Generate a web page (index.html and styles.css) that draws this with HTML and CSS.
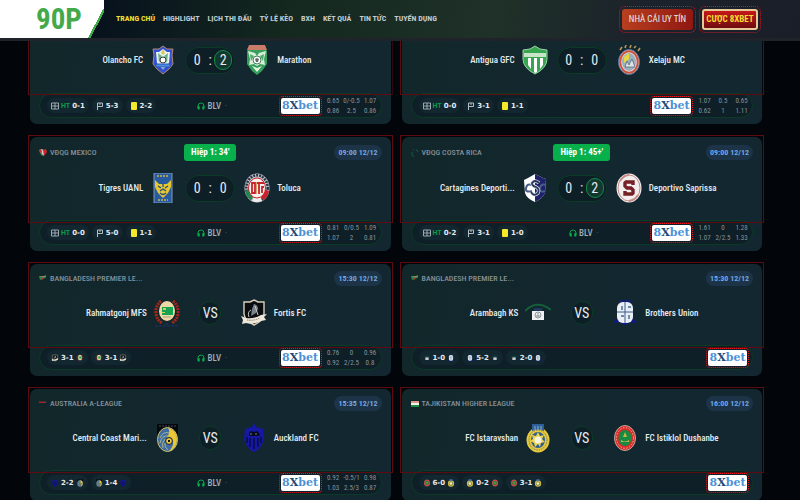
FILE: index.html
```html
<!DOCTYPE html>
<html lang="vi">
<head>
    <meta charset="UTF-8">
    <meta name="viewport" content="width=device-width, initial-scale=1.0">
    <title>90P</title>
    <link rel="stylesheet" href="styles.css">
</head>
<body>
    <!-- Icon dùng chung -->
    <svg class="sprite" aria-hidden="true">
        <symbol id="i-field" viewBox="0 0 8 8"><path d="M.5 1h7v6h-7zM4 1v6M.5 4h7" fill="none" stroke="#a9b4bb" stroke-width=".9"/></symbol>
        <symbol id="i-corner" viewBox="0 0 8 8"><path d="M1.5 8V1h5v3.500h-5M4 1v2" fill="none" stroke="#b4bec4" stroke-width="1"/></symbol>
        <symbol id="i-head" viewBox="0 0 8 8"><path d="M1 5V4a3 3 0 0 1 6 0v1" fill="none" stroke="#08a84a" stroke-width="1"/><path d="M.5 4.2h2.2v3.3H1.2l-.7-.8zM5.3 4.2h2.2v2.5l-.7.8H5.3z" fill="#08b04c"/></symbol>

        <symbol id="f-mexico" viewBox="0 0 8 8"><path d="M0 1l3-1 1 7-2-1z" fill="#3a8c5a"/><path d="M2 0l3 1v6L3 5z" fill="#ccc"/><path d="M4 1l3-1 1 3-3 4z" fill="#d2232a"/><path d="M0 1l2-1 1 3-2 1z" fill="#c8342f"/></symbol>
        <symbol id="f-costa" viewBox="0 0 8 8"><path d="M1 3v3l2 2M5 1h1l1 2M2 1l1-1" fill="none" stroke="#145c40"/></symbol>
        <symbol id="f-bangla" viewBox="0 0 8 8"><path d="M0 1l3 .5 4-1v2L4 4 1 5z" fill="#2f8250"/><path d="M0 1l3 .5 4-1v.8l-4 1z" fill="#c89a68"/><path d="M2 3h2v1.5H2z" fill="#b5322c"/></symbol>
        <symbol id="f-aus" viewBox="0 0 8 8"><path d="M0 1l1 1 1-1 1 1 1-1 1 1 2-1v2H0z" fill="#a8242c"/></symbol>
        <symbol id="f-tajik" viewBox="0 0 8 8"><path d="M0 1h8v2H0z" fill="#d89a90"/><path d="M0 3h8v2H0z" fill="#f3f3ea"/><path d="M0 5h8v2H0z" fill="#1e8c45"/></symbol>

        <symbol id="c-olancho" viewBox="0 0 26 30"><path d="M13 1l4 3h6l-1 6 1 9-4 5-6 5-6-5-4-5 1-9-1-6h6z" fill="#3550d8" stroke="#b58a6a"/><path d="M13 4l4 3h3l-1 11-6 7-6-7L6 7h3z" fill="#e9f2ee"/><path d="M8 8l4 3-3 7zM18 8l-4 3 3 7z" fill="#68b48c"/><path d="M13 4l2 4-2 2-2-2z" fill="#d4c95a"/><circle cx="13" cy="15" r="3" fill="#fff" stroke="#333"/><path d="M6 19h14v3H6zM9 24h8" fill="#4c8fe0" stroke="#2455b8"/></symbol>
        <symbol id="c-marathon" viewBox="0 0 26 30"><path d="M6 1h14l3 5v13l-5 7-5 4-5-4-5-7V6z" fill="#35a05b"/><path d="M5 0h16l2 5H3z" fill="#c77b68"/><path d="M4 6l7 2 2 3 2-3 7-2-2 8 1 6-5-1-3 2-3-2-5 1 1-6z" fill="#d9eeda"/><path d="M6 9l4 2-3 5zM20 9l-4 2 3 5z" fill="#4bab69"/><path d="M8 21l5 6 5-6-5 2z" fill="#e5f3e5"/><circle cx="13" cy="15" r="4" fill="#fff" stroke="#43805b"/><path d="M11 14l2-1 2 1-1 3h-2z" fill="#666"/></symbol>
        <symbol id="c-antigua" viewBox="0 0 26 30"><path d="M13 1l5 3 7 1v9q0 9-12 15Q1 23 1 14V5l7-1z" fill="#36a651" stroke="#9bd1a6"/><path d="M2 8h22v4H2z" fill="#c7e4c9"/><path d="M6 13h3v11l-3-4zM12 13h3v14l-2 1-1-1zM18 13h3v7l-3 4z" fill="#fff"/></symbol>
        <symbol id="c-xelaju" viewBox="0 0 26 30"><path d="M4 5l2-3M9 3l1-3M14 3l1-3M18 3l2-2M22 6l2-3" stroke="#b7955b" stroke-width="1.6"/><ellipse cx="13" cy="17" rx="10.5" ry="12.5" fill="#e3dcda" stroke="#4f6f98"/><ellipse cx="13" cy="17" rx="8.8" ry="10.8" fill="none" stroke="#ce5140" stroke-width="2"/><ellipse cx="13" cy="17" rx="7" ry="9" fill="#9bb0bf"/><path d="M8 12l5-4v6l-5 4z" fill="#e6d83e"/><path d="M9 22l2-6 2 4 3-6 3 8z" fill="#dfe4e8" stroke="#566a7c" stroke-width=".8"/></symbol>
        <symbol id="c-tigres" viewBox="0 0 26 30"><path d="M4 0h18v30H4z" fill="#285a9e" stroke="#8199b8"/><path d="M7 3h12M8 27h10" stroke="#a39d5e" stroke-width="2" stroke-dasharray="2 1"/><path d="M5 7l4 4h8l4-4v7l-3 6-5 5-5-5-3-6z" fill="#e4c532"/><path d="M8 13l3 2M18 13l-3 2M10 18l3-2 3 2M10 20q3 3 6 0M13 10v4" stroke="#234c82" stroke-width="1.3" fill="none"/></symbol>
        <symbol id="c-toluca" viewBox="0 0 26 30"><ellipse cx="13" cy="15" rx="12.5" ry="14.5" fill="#c9c8c9"/><ellipse cx="13" cy="15" rx="10.7" ry="12.7" fill="none" stroke="#27364d" stroke-width="2.600" stroke-dasharray="2 1"/><path d="M1 18l4-2 4 9-2 2q-5-3-6-9z" fill="#238550"/><path d="M25 18l-5-2-3 9 3 2q4-3 5-9z" fill="#c8232a"/><path d="M9 25h8l1 3q-5 2-10 0z" fill="#eee"/><ellipse cx="13" cy="15" rx="8.5" ry="10" fill="#f6efed" stroke="#c8242b"/><path d="M8 10v10h3V10zM13 10h7M15 10v11M20 14h-2v6" fill="none" stroke="#c8242b" stroke-width="1.800"/><path d="M12.500 9v12" stroke="#c79a51" stroke-width=".8"/></symbol>
        <symbol id="c-cartagines" viewBox="0 0 26 30"><path d="M13 1l8 4 3 1-1 14q-3 6-10 9Q5 26 3 20L2 7l4-2z" fill="#fff"/><path d="M13 1l8 4 3 1-1 14q-3 6-10 9z" fill="#1d2269"/><path d="M10 12q-5-2-6 3t6 3M24 12q-5-2-6 3t5 3" fill="none" stroke="#4b5d88" stroke-width="2"/><path d="M17 10q-4-4-7 0 0 3 4 4 4 2 2 6-4 4-7-1" fill="none" stroke="#dce2eb" stroke-width="3.4"/><path d="M17 10q-4-4-7 0 0 3 4 4 4 2 2 6-4 4-7-1" fill="none" stroke="#26345e" stroke-width="1.8"/></symbol>
        <symbol id="c-saprissa" viewBox="0 0 26 30"><ellipse cx="13" cy="15" rx="12.5" ry="14.5" fill="#f3eeee"/><ellipse cx="13" cy="15" rx="11" ry="13" fill="none" stroke="#b4706c" stroke-width=".8"/><path d="M4 8q4-6 9-6M22 22q-3 5-9 6" fill="none" stroke="#c78a84" stroke-width="2"/><path d="M17 12V9h-7l-1 1v3l2 2h4l2 2v3l-1 1H9v-3" fill="none" stroke="#762126" stroke-width="3.400"/></symbol>
        <symbol id="c-rahmat" viewBox="0 0 26 30"><path d="M7 3q-6 5-5 13 1 6 6 9M19 3q6 5 5 13-1 6-6 9" fill="none" stroke="#a92618" stroke-width="3" stroke-dasharray="2 .9"/><ellipse cx="13" cy="13" rx="8" ry="10" fill="#eed9a6"/><path d="M8 9h11v8H8z" fill="#16a352"/><path d="M9 10h3v2H9zM8 14h3v1H8z" fill="#dacb58"/><path d="M9 19h8" stroke="#a79b7c"/><path d="M1 28h24M11 26h4" stroke="#1e2a6c" stroke-width="1.4" stroke-dasharray="3 1"/></symbol>
        <symbol id="c-fortis" viewBox="0 0 26 30"><path d="M13 2l4 2h6v12q-1 7-10 11Q4 23 3 16V4h6z" fill="#0a0d10" stroke="#d9d0bb" stroke-width="1.4"/><path d="M13 6q4 1 4 5l-2 4-5 3 1-7z" fill="#79828a"/><path d="M8 19q-2-5 2-7M14 8l3 9" stroke="#c9c9c4" fill="none"/><path d="M0 18l5 2q8 1 15-3l6-1-3 3 2 3-5 1q-8 4-15 2l-4 1 1-4z" fill="#eee8da"/><path d="M6 22q7 1 13-2" stroke="#8a8377" fill="none" stroke-dasharray="1.4 .8"/></symbol>
        <symbol id="c-arambagh" viewBox="0 0 26 30"><path d="M0 13Q12 1 26 12" fill="none" stroke="#14603c" stroke-width="1.8"/><path d="M9 10h8v3H9z" fill="#1d3a5e"/><path d="M7 13h12v9H7z" fill="#eef2f4"/><circle cx="13" cy="17" r="3" fill="none" stroke="#8b949b"/><path d="M11 18h4M13 15v4" stroke="#8b949b"/></symbol>
        <symbol id="c-brothers" viewBox="0 0 26 30"><path d="M7 2h12v5H7z" fill="#12206e"/><path d="M1 25l6-6 6 4 6-4 6 6-6-1-6 3-6-3z" fill="#10159a"/><rect x="5" y="4" width="16" height="21" rx="6" fill="#e9eff5"/><path d="M13 4v21M5 14h16" stroke="#3b5c8e"/><path d="M10 8v4M16 9h3M9 18h3M17 17v4" stroke="#40688c" stroke-width="1.4"/></symbol>
        <symbol id="c-coast" viewBox="0 0 26 30"><path d="M3 1h21v17H3z" fill="#05080d"/><path d="M5 3h17" stroke="#444a52" stroke-dasharray="2 1"/><ellipse cx="13.500" cy="16.500" rx="10" ry="12" fill="#3d6ca6" stroke="#d3c268"/><path d="M14 5q9 2 9 12-1 9-8 11 5-5 4-10-1-5-6-4 4-5 1-9z" fill="#ecc934"/><path d="M6 15q3-7 9-5M6 20q2-8 8-7M9 25q-2-5 2-9M14 27q-4-3-3-7" fill="none" stroke="#a8b88d"/><circle cx="15" cy="18" r="3.4" fill="#e9c93f" stroke="#222"/><path d="M14 17h2v2h-2z" fill="#111"/></symbol>
        <symbol id="c-auckland" viewBox="0 0 26 30"><path d="M13 0l2 4 7 2 1 10q-2 9-10 13Q5 25 3 16L4 6l7-2z" fill="#1418a4"/><path d="M8 10l2-2 3 1 3-1 3 3-1 2H8z" fill="#080a20"/><path d="M6 14v6M9 15v9M13 15v11M17 15v9M20 14v6" stroke="#070a3c" stroke-width="1.4"/><path d="M9 11h2M14 11h2" stroke="#7d7d83"/></symbol>
        <symbol id="c-istar" viewBox="0 0 26 30"><path d="M7 1h12v7H7z" fill="#2d5f98"/><ellipse cx="13" cy="17" rx="11.500" ry="12.500" fill="#e8c93a"/><ellipse cx="13" cy="17" rx="9" ry="10" fill="none" stroke="#6f7d72" stroke-dasharray="1.500 1"/><ellipse cx="13" cy="17" rx="7" ry="8" fill="#315e8f"/><path d="M13 9l2 4 4-1-2 4 3 3-4 1-1 4-2-3-3 3-1-4-4-2 3-2-1-4 4 1z" fill="#ecd34c"/><circle cx="13" cy="17" r="3.500" fill="#f5f2df"/><path d="M7 3q6-4 12 0v5q-6-3-12 0z" fill="#2d5f98"/><path d="M9 4h8M9 6h8" stroke="#8dadc9" stroke-dasharray="2 1"/></symbol>
        <symbol id="c-istiklol" viewBox="0 0 26 30"><ellipse cx="13" cy="15" rx="10.500" ry="12.500" fill="#d92d2c" stroke="#c2a69a"/><ellipse cx="13" cy="15" rx="8.500" ry="10.300" fill="none" stroke="#f2aaa0" stroke-dasharray="1.500 1.500"/><ellipse cx="13" cy="15" rx="6.500" ry="8" fill="#178a43"/><path d="M13 9l2 5h-4zM9 17q4 3 8 0v2H9z" fill="#ccb640"/></symbol>
    </svg>

    <header class="header">
        <a class="logo" href="#"><span class="logo-text">90P</span></a>
        <nav class="nav">
            <a class="active" href="#">TRANG CHỦ</a>
            <a href="#">HIGHLIGHT</a>
            <a href="#">LỊCH THI ĐẤU</a>
            <a href="#">TỶ LỆ KÈO</a>
            <a href="#">BXH</a>
            <a href="#">KẾT QUẢ</a>
            <a href="#">TIN TỨC</a>
            <a href="#">TUYỂN DỤNG</a>
        </nav>
        <div class="header-actions">
            <a class="btn btn-red" href="#">NHÀ CÁI UY TÍN</a>
            <a class="btn btn-gold" href="#">CƯỢC 8XBET</a>
        </div>
    </header>

    <main class="matches">
        <!-- Olancho - Marathon -->
        <article class="card card-top">
            <a class="match" href="#">
                <div class="teams">
                    <span class="team home">Olancho FC</span>
                    <svg class="crest"><use href="#c-olancho"/></svg>
                    <div class="score"><span>0</span><i>:</i><span class="goal">2</span></div>
                    <svg class="crest"><use href="#c-marathon"/></svg>
                    <span class="team">Marathon</span>
                </div>
            </a>
            <div class="foot">
                <div class="chips">
                    <span class="chip"><svg class="ico"><use href="#i-field"/></svg><em>HT</em> 0-1</span>
                    <span class="chip"><svg class="ico"><use href="#i-corner"/></svg>5-3</span>
                    <span class="chip"><b class="yellow"></b>2-2</span>
                </div>
                <div class="blv"><svg class="ico"><use href="#i-head"/></svg>BLV <small>·</small></div>
                <div class="bet">
                    <a class="bet-logo" href="#">8<b>X</b>bet</a>
                    <div class="odds"><span>0.65</span><span>0/-0.5</span><span>1.07</span><span>0.86</span><span>2.5</span><span>0.86</span></div>
                </div>
            </div>
        </article>

        <!-- Antigua - Xelaju -->
        <article class="card card-top">
            <a class="match" href="#">
                <div class="teams">
                    <span class="team home">Antigua GFC</span>
                    <svg class="crest"><use href="#c-antigua"/></svg>
                    <div class="score"><span>0</span><i>:</i><span>0</span></div>
                    <svg class="crest"><use href="#c-xelaju"/></svg>
                    <span class="team">Xelaju MC</span>
                </div>
            </a>
            <div class="foot">
                <div class="chips">
                    <span class="chip"><svg class="ico"><use href="#i-field"/></svg><em>HT</em> 0-0</span>
                    <span class="chip"><svg class="ico"><use href="#i-corner"/></svg>3-1</span>
                    <span class="chip"><b class="yellow"></b>1-1</span>
                </div>
                <div class="bet">
                    <a class="bet-logo" href="#">8<b>X</b>bet</a>
                    <div class="odds"><span>1.07</span><span>0.5</span><span>0.65</span><span>0.62</span><span>1</span><span>1.11</span></div>
                </div>
            </div>
        </article>

        <!-- Tigres - Toluca -->
        <article class="card">
            <a class="match" href="#">
                <div class="head live">
                    <span class="league"><svg class="ico"><use href="#f-mexico"/></svg>VĐQG MEXICO</span>
                    <span class="status">Hiệp 1: 34'</span>
                    <span class="time">09:00 12/12</span>
                </div>
                <div class="teams">
                    <span class="team home">Tigres UANL</span>
                    <svg class="crest"><use href="#c-tigres"/></svg>
                    <div class="score"><span>0</span><i>:</i><span>0</span></div>
                    <svg class="crest"><use href="#c-toluca"/></svg>
                    <span class="team">Toluca</span>
                </div>
            </a>
            <div class="foot">
                <div class="chips">
                    <span class="chip"><svg class="ico"><use href="#i-field"/></svg><em>HT</em> 0-0</span>
                    <span class="chip"><svg class="ico"><use href="#i-corner"/></svg>5-0</span>
                    <span class="chip"><b class="yellow"></b>1-1</span>
                </div>
                <div class="blv"><svg class="ico"><use href="#i-head"/></svg>BLV <small>·</small></div>
                <div class="bet">
                    <a class="bet-logo" href="#">8<b>X</b>bet</a>
                    <div class="odds"><span>0.81</span><span>0/0.5</span><span>1.09</span><span>1.07</span><span>2</span><span>0.81</span></div>
                </div>
            </div>
        </article>

        <!-- Cartagines - Saprissa -->
        <article class="card">
            <a class="match" href="#">
                <div class="head live">
                    <span class="league"><svg class="ico"><use href="#f-costa"/></svg>VĐQG COSTA RICA</span>
                    <span class="status">Hiệp 1: 45+'</span>
                    <span class="time">09:00 12/12</span>
                </div>
                <div class="teams">
                    <span class="team home">Cartagines Deporti...</span>
                    <svg class="crest"><use href="#c-cartagines"/></svg>
                    <div class="score"><span>0</span><i>:</i><span class="goal">2</span></div>
                    <svg class="crest"><use href="#c-saprissa"/></svg>
                    <span class="team">Deportivo Saprissa</span>
                </div>
            </a>
            <div class="foot">
                <div class="chips">
                    <span class="chip"><svg class="ico"><use href="#i-field"/></svg><em>HT</em> 0-2</span>
                    <span class="chip"><svg class="ico"><use href="#i-corner"/></svg>3-1</span>
                    <span class="chip"><b class="yellow"></b>1-0</span>
                </div>
                <div class="blv"><svg class="ico"><use href="#i-head"/></svg>BLV <small>·</small></div>
                <div class="bet">
                    <a class="bet-logo" href="#">8<b>X</b>bet</a>
                    <div class="odds"><span>1.61</span><span>0</span><span>1.28</span><span>1.07</span><span>2/2.5</span><span>1.33</span></div>
                </div>
            </div>
        </article>

        <!-- Rahmatgonj - Fortis -->
        <article class="card">
            <a class="match" href="#">
                <div class="head">
                    <span class="league"><svg class="ico"><use href="#f-bangla"/></svg>BANGLADESH PREMIER LE...</span>
                    <span class="time">15:30 12/12</span>
                </div>
                <div class="teams">
                    <span class="team home">Rahmatgonj MFS</span>
                    <svg class="crest"><use href="#c-rahmat"/></svg>
                    <div class="versus"><span>VS</span></div>
                    <svg class="crest"><use href="#c-fortis"/></svg>
                    <span class="team">Fortis FC</span>
                </div>
            </a>
            <div class="foot">
                <div class="chips">
                    <span class="chip"><svg class="ico"><use href="#c-fortis"/></svg>3-1<svg class="ico"><use href="#c-rahmat"/></svg></span>
                    <span class="chip"><svg class="ico"><use href="#c-rahmat"/></svg>3-1<svg class="ico"><use href="#c-fortis"/></svg></span>
                </div>
                <div class="blv"><svg class="ico"><use href="#i-head"/></svg>BLV <small>·</small></div>
                <div class="bet">
                    <a class="bet-logo" href="#">8<b>X</b>bet</a>
                    <div class="odds"><span>0.76</span><span>0</span><span>0.96</span><span>0.92</span><span>2/2.5</span><span>0.8</span></div>
                </div>
            </div>
        </article>

        <!-- Arambagh - Brothers Union -->
        <article class="card">
            <a class="match" href="#">
                <div class="head">
                    <span class="league"><svg class="ico"><use href="#f-bangla"/></svg>BANGLADESH PREMIER LE...</span>
                    <span class="time">15:30 12/12</span>
                </div>
                <div class="teams">
                    <span class="team home">Arambagh KS</span>
                    <svg class="crest"><use href="#c-arambagh"/></svg>
                    <div class="versus"><span>VS</span></div>
                    <svg class="crest"><use href="#c-brothers"/></svg>
                    <span class="team">Brothers Union</span>
                </div>
            </a>
            <div class="foot">
                <div class="chips">
                    <span class="chip"><svg class="ico"><use href="#c-arambagh"/></svg>1-0<svg class="ico"><use href="#c-brothers"/></svg></span>
                    <span class="chip"><svg class="ico"><use href="#c-brothers"/></svg>5-2<svg class="ico"><use href="#c-arambagh"/></svg></span>
                    <span class="chip"><svg class="ico"><use href="#c-arambagh"/></svg>2-0<svg class="ico"><use href="#c-brothers"/></svg></span>
                </div>
                <div class="bet">
                    <a class="bet-logo" href="#">8<b>X</b>bet</a>
                </div>
            </div>
        </article>

        <!-- Central Coast - Auckland -->
        <article class="card">
            <a class="match" href="#">
                <div class="head">
                    <span class="league"><svg class="ico"><use href="#f-aus"/></svg>AUSTRALIA A-LEAGUE</span>
                    <span class="time">15:35 12/12</span>
                </div>
                <div class="teams">
                    <span class="team home">Central Coast Mari...</span>
                    <svg class="crest"><use href="#c-coast"/></svg>
                    <div class="versus"><span>VS</span></div>
                    <svg class="crest"><use href="#c-auckland"/></svg>
                    <span class="team">Auckland FC</span>
                </div>
            </a>
            <div class="foot">
                <div class="chips">
                    <span class="chip"><svg class="ico"><use href="#c-auckland"/></svg>2-2<svg class="ico"><use href="#c-coast"/></svg></span>
                    <span class="chip"><svg class="ico"><use href="#c-coast"/></svg>1-4<svg class="ico"><use href="#c-auckland"/></svg></span>
                </div>
                <div class="blv"><svg class="ico"><use href="#i-head"/></svg>BLV <small>·</small></div>
                <div class="bet">
                    <a class="bet-logo" href="#">8<b>X</b>bet</a>
                    <div class="odds"><span>0.92</span><span>-0.5/1</span><span>0.98</span><span>1.03</span><span>2.5/3</span><span>0.87</span></div>
                </div>
            </div>
        </article>

        <!-- Istaravshan - Istiklol -->
        <article class="card">
            <a class="match" href="#">
                <div class="head">
                    <span class="league"><svg class="ico"><use href="#f-tajik"/></svg>TAJIKISTAN HIGHER LEAGUE</span>
                    <span class="time">16:00 12/12</span>
                </div>
                <div class="teams">
                    <span class="team home">FC Istaravshan</span>
                    <svg class="crest"><use href="#c-istar"/></svg>
                    <div class="versus"><span>VS</span></div>
                    <svg class="crest"><use href="#c-istiklol"/></svg>
                    <span class="team">FC Istiklol Dushanbe</span>
                </div>
            </a>
            <div class="foot">
                <div class="chips">
                    <span class="chip"><svg class="ico"><use href="#c-istiklol"/></svg>6-0<svg class="ico"><use href="#c-istar"/></svg></span>
                    <span class="chip"><svg class="ico"><use href="#c-istar"/></svg>0-2<svg class="ico"><use href="#c-istiklol"/></svg></span>
                    <span class="chip"><svg class="ico"><use href="#c-istiklol"/></svg>3-1<svg class="ico"><use href="#c-istar"/></svg></span>
                </div>
                <div class="bet">
                    <a class="bet-logo" href="#">8<b>X</b>bet</a>
                </div>
            </div>
        </article>
    </main>
</body>
</html>
```
FILE: styles.css
```css
* {
    box-sizing: border-box;
}
body {
    margin: 0;
    background: #02050a;
    color: #e6ecef;
    font-family: "Roboto Condensed", Roboto, "Liberation Sans", sans-serif;
    font-size: 9px;
    line-height: 12px;
}
a {
    color: inherit;
    text-decoration: none;
}
.sprite {
    display: none;
}

/* Thanh đầu trang */
.header {
    display: flex;
    align-items: stretch;
    height: 41px;
    padding-right: 42px;
    border-bottom: 3px solid #20232a;
    background: linear-gradient(100deg, #07111d 12%, #14281f 36%, #1f3128 62%, #1c222b 80%, #1a1e28);
}
.logo {
    display: flex;
    align-items: center;
    width: 104px;
    padding-left: 36px;
    background: linear-gradient(118deg, #fff 87%, #3fab4b 87%, #3fab4b 89%, transparent 89%);
}
.logo-text {
    color: #43a94b;
    font-size: 29px;
    font-weight: bold;
    line-height: 32px;
}
.nav {
    display: flex;
    align-items: center;
    gap: 8px;
    margin-left: 12px;
    color: #c3cbce;
    font-size: 8px;
    font-weight: bold;
    white-space: nowrap;
}
.nav .active {
    color: #f5e02c;
}
.header-actions {
    display: flex;
    align-items: center;
    gap: 9px;
    margin-left: auto;
}
.btn {
    height: 21px;
    border-radius: 3px;
    outline: 1px dotted #d8101a;
    outline-offset: 2px;
    text-align: center;
    line-height: 21px;
    white-space: nowrap;
}
.btn-red {
    width: 71px;
    background: linear-gradient(100deg, #b9401f, #8f1712);
}
.btn-gold {
    width: 56px;
    border: 2px solid #e6c994;
    background: linear-gradient(#c8161a, #6d0c10);
    color: #f7dc2e;
    font-weight: bold;
    line-height: 17px;
}

/* Danh sách trận đấu */
.matches {
    display: grid;
    grid-template-columns: 1fr 1fr;
    gap: 13px 11px;
    padding: 0 38px 13px 30px;
}
.card {
    padding-bottom: 6px;
    border-radius: 7px;
    background: linear-gradient(100deg, #12272a, #132731 80%);
}
.card-top {
    border-radius: 0 0 7px 7px;
}
.match {
    display: block;
    padding: 7px 9px 18px;
    outline: 1px solid #5e0a11;
    outline-offset: 1px;
}
.card-top .match {
    padding-top: 4px;
    clip-path: inset(0 -2px -2px);
}
.card-top .foot {
    margin-top: 0;
}
.head {
    display: flex;
    align-items: center;
    justify-content: space-between;
    height: 15px;
    margin-bottom: 12px;
}
.live {
    display: grid;
    grid-template-columns: 1fr auto 1fr;
    height: 17px;
}
.league {
    display: flex;
    align-items: center;
    gap: 3px;
    color: #84919a;
    font-size: 8px;
    font-weight: 500;
}
.status {
    padding: 0 7px;
    border-radius: 3px;
    background: #08b04c;
    color: #fff;
    font-weight: bold;
    line-height: 17px;
}
.time {
    justify-self: end;
    padding: 0 4px;
    border-radius: 8px;
    background: #1d3348;
    color: #6fa9e4;
    font-size: 8px;
    font-weight: bold;
    line-height: 15px;
}

/* Hai đội và tỉ số */
.teams {
    display: grid;
    grid-template-columns: 1fr 26px auto 26px 1fr;
    align-items: center;
    height: 30px;
}
.team {
    padding: 0 7px;
    font-weight: 500;
    white-space: nowrap;
}
.home {
    text-align: right;
}
.crest {
    width: 26px;
    height: 30px;
}
.score {
    display: flex;
    align-items: center;
    justify-content: space-between;
    width: 50px;
    height: 27px;
    margin: 0 9px;
    padding: 0 2px;
    border: 1px solid #0b3b25;
    border-radius: 14px;
    background: #0e1e27;
    font-size: 14px;
}
.score span {
    width: 18px;
    height: 20px;
    line-height: 20px;
    text-align: center;
}
.score i {
    font-style: normal;
}
.score .goal {
    border: 1px solid #168a48;
    border-radius: 10px;
    background: #12382f;
    line-height: 18px;
}
.versus {
    display: flex;
    justify-content: center;
    width: 61px;
}
.versus span {
    width: 22px;
    height: 24px;
    border: 1px solid #0b3b25;
    border-radius: 12px;
    background: #0e1e27;
    font-size: 14px;
    line-height: 22px;
    text-align: center;
}

/* Chân thẻ */
.foot {
    display: grid;
    grid-template-columns: 1fr auto 1fr;
    align-items: center;
    height: 25px;
    margin: -1px 9px 0;
    padding: 0 3px 0 7px;
    border: 1px solid #0b3b25;
    border-radius: 13px;
    background: #0e1f27;
}
.chips {
    display: flex;
    gap: 3px;
}
.chip {
    display: flex;
    align-items: center;
    gap: 2px;
    height: 15px;
    padding: 0 4px;
    border-radius: 8px;
    background: #12272f;
    font-family: "DejaVu Sans", sans-serif;
    font-size: 7px;
    font-weight: bold;
    white-space: nowrap;
}
.chip em {
    color: #0a9c46;
    font-family: Roboto, sans-serif;
    font-style: normal;
}
.ico {
    flex: none;
    width: 8px;
    height: 8px;
}
.yellow {
    width: 6px;
    height: 8px;
    margin: 0 1px;
    border-radius: 1px;
    background: #f5ea2a;
}
.blv {
    display: flex;
    align-items: center;
    gap: 2px;
    color: #a3adb2;
    font-weight: 500;
}
.blv small {
    margin-left: 2px;
    color: #55626a;
}
.bet {
    display: flex;
    grid-column: 3;
    align-items: center;
    justify-content: flex-end;
    gap: 4px;
}
.bet-logo {
    width: 39px;
    height: 16px;
    margin: 0 2px;
    border-radius: 2px;
    outline: 1px dotted #f01018;
    outline-offset: 1px;
    background: #fff;
    color: #4a92d6;
    font-family: "DejaVu Serif", serif;
    font-size: 11px;
    font-weight: bold;
    line-height: 16px;
    text-align: center;
}
.bet-logo b {
    color: #1f4a78;
}
.odds {
    display: grid;
    grid-template-columns: 15px 22px 15px;
    color: #87939a;
    font-size: 7px;
    line-height: 10px;
    text-align: center;
    white-space: nowrap;
}
```
